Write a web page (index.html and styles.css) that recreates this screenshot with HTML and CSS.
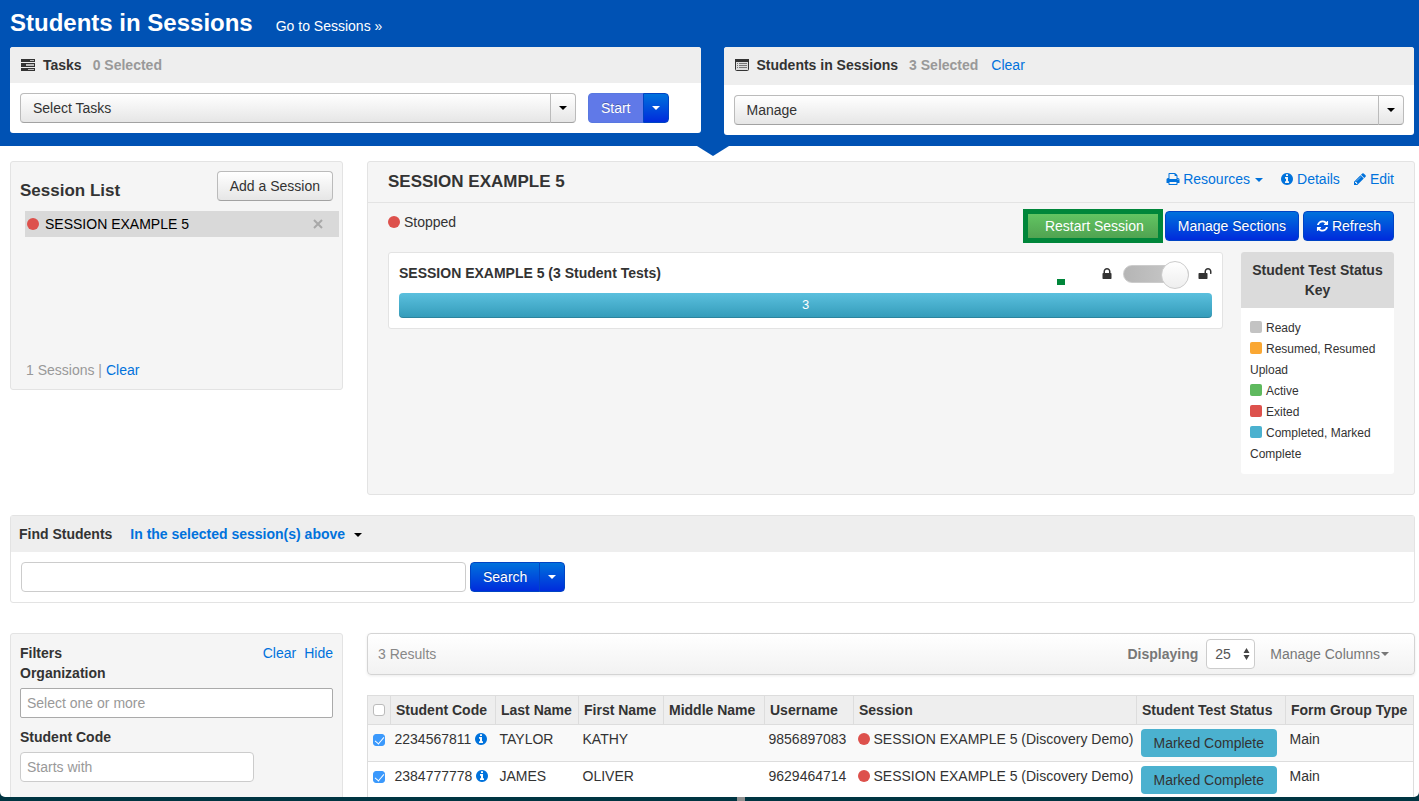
FILE: index.html
```html
<!DOCTYPE html>
<html lang="en">
<head>
    <meta charset="UTF-8">
    <meta name="viewport" content="width=device-width, initial-scale=1.0">
    <title>Students in Sessions</title>
    <link rel="stylesheet" href="styles.css">
</head>
<body>
    <svg class="sprite" aria-hidden="true">
        <symbol id="info" viewBox="0 128 1536 1536"><path d="M1024 1376v-160q0-14-9-23t-23-9h-96v-512q0-14-9-23t-23-9h-320q-14 0-23 9t-9 23v160q0 14 9 23t23 9h96v320h-96q-14 0-23 9t-9 23v160q0 14 9 23t23 9h448q14 0 23-9t9-23zm-128-896v-160q0-14-9-23t-23-9h-192q-14 0-23 9t-9 23v160q0 14 9 23t23 9h192q14 0 23-9t9-23zm640 416q0 209-103 385.5t-279.5 279.5-385.5 103-385.5-103-279.5-279.5-103-385.5 103-385.5 279.5-279.5 385.5-103 385.5 103 279.5 279.5 103 385.5z"/></symbol>
    </svg>
    <div class="window">
        <header class="top">
            <div class="title-row">
                <h1>Students in Sessions</h1>
                <a href="#">Go to Sessions »</a>
            </div>
            <div class="top-panels">
                <section class="card">
                    <div class="card-head">
                        <svg class="icon-wide" viewBox="0 0 14 12"><path fill="#333" d="M0 0h14v3H0zM0 4h14v4H0zM0 9h14v3H0z"/><path fill="#bbb" d="M9 1h4v1H9zM5 5h8v2H5zM7 10h6v1H7z"/></svg>
                        <b>Tasks</b>
                        <span class="count">0 Selected</span>
                    </div>
                    <div class="card-body">
                        <div class="split tasks-split">
                            <button class="btn split-main">Select Tasks</button>
                            <button class="btn split-caret" aria-label="Show tasks"><i class="caret"></i></button>
                        </div>
                        <div class="split">
                            <button class="btn primary split-main faded">Start</button>
                            <button class="btn primary split-caret" aria-label="Start options"><i class="caret"></i></button>
                        </div>
                    </div>
                </section>
                <section class="card">
                    <div class="card-head tall">
                        <svg class="icon-wide" viewBox="0 0 14 12"><rect x=".5" y=".5" width="13" height="11" rx="1" fill="#ddd" stroke="#333"/><path fill="#333" d="M0 0h14v3H0z"/><path fill="#777" d="M2 4h1v1H2zM4 4h8v1H4zM2 6h1v1H2zM4 6h8v1H4zM2 8h1v1H2zM4 8h8v1H4z"/></svg>
                        <b>Students in Sessions</b>
                        <span class="count">3 Selected</span>
                        <a href="#">Clear</a>
                    </div>
                    <div class="card-body">
                        <div class="split manage-split">
                            <button class="btn split-main">Manage</button>
                            <button class="btn split-caret" aria-label="Show manage options"><i class="caret"></i></button>
                        </div>
                    </div>
                </section>
            </div>
        </header>

        <main>
            <div class="columns">
                <section class="panel session-list">
                    <div class="list-head">
                        <h2>Session List</h2>
                        <button class="btn">Add a Session</button>
                    </div>
                    <ul>
                        <li><i class="dot"></i><span>SESSION EXAMPLE 5</span><button class="remove" aria-label="Remove session"><svg viewBox="0 0 10 10"><path d="M1 1l8 8M9 1l-8 8"/></svg></button></li>
                    </ul>
                    <p class="muted">1 Sessions | <a href="#">Clear</a></p>
                </section>

                <section class="panel session-detail">
                    <div class="detail-head">
                        <h2>SESSION EXAMPLE 5</h2>
                        <nav>
                            <a href="#"><svg class="icon" viewBox="0 0 1792 1792"><path d="M448 1536h896v-256h-896v256zm0-640h896v-384h-160q-40 0-68-28t-28-68v-160h-640v640zm1152 64q0-26-19-45t-45-19-45 19-19 45 19 45 45 19 45-19 19-45zm128 0v416q0 13-9.5 22.5t-22.5 9.5h-224v160q0 40-28 68t-68 28h-960q-40 0-68-28t-28-68v-160h-224q-13 0-22.5-9.5t-9.5-22.5v-416q0-79 56.5-135.5t135.5-56.5h64v-544q0-40 28-68t68-28h672q40 0 88 20t76 48l152 152q28 28 48 76t20 88v256h64q79 0 135.5 56.5t56.5 135.5z"/></svg>Resources<i class="caret"></i></a>
                            <a href="#"><svg class="icon-info"><use href="#info"/></svg>Details</a>
                            <a href="#"><svg class="icon" viewBox="0 0 1792 1792"><path d="M491 1536l91-91-235-235-91 91v107h128v128h107zm523-928q0-22-22-22-10 0-17 7l-542 542q-7 7-7 17 0 22 22 22 10 0 17-7l542-542q7-7 7-17zm-54-192l416 416-832 832h-416v-416zm683 96q0 53-37 90l-166 166-416-416 166-165q36-38 90-38 53 0 91 38l235 234q37 39 37 91z"/></svg>Edit</a>
                        </nav>
                    </div>
                    <div class="detail-actions">
                        <p><i class="dot"></i>Stopped</p>
                        <div class="actions">
                            <button class="restart">Restart Session</button>
                            <button class="btn primary">Manage Sections</button>
                            <button class="btn primary"><svg class="icon" viewBox="0 0 1792 1792"><path d="M1639 1056q0 5-1 7-64 268-268 434.5t-478 166.5q-146 0-282.5-55t-243.5-157l-129 129q-19 19-45 19t-45-19-19-45v-448q0-26 19-45t45-19h448q26 0 45 19t19 45-19 45l-137 137q71 66 161 102t187 36q134 0 250-65t186-179q11-17 53-117 8-23 30-23h192q13 0 22.5 9.5t9.5 22.5zm25-800v448q0 26-19 45t-45 19h-448q-26 0-45-19t-19-45 19-45l138-138q-148-137-349-137-134 0-250 65t-186 179q-11 17-53 117-8 23-30 23h-199q-13 0-22.5-9.5t-9.5-22.5v-7q65-268 270-434.5t480-166.5q146 0 284 55.5t245 156.5l130-129q19-19 45-19t45 19 19 45z"/></svg>Refresh</button>
                        </div>
                    </div>
                    <div class="detail-body">
                        <div class="tests">
                            <div class="tests-head">
                                <b>SESSION EXAMPLE 5 (3 Student Tests)</b>
                                <i class="marker"></i>
                                <label class="lock-toggle">
                                    <svg class="icon" viewBox="0 0 1792 1792"><path d="M640 768h512v-192q0-106-75-181t-181-75-181 75-75 181v192zm832 96v576q0 40-28 68t-68 28h-960q-40 0-68-28t-28-68v-576q0-40 28-68t68-28h32v-192q0-184 132-316t316-132 316 132 132 316v192h32q40 0 68 28t28 68z"/></svg>
                                    <input type="checkbox" checked aria-label="Unlock session">
                                    <svg class="icon" viewBox="0 0 1792 1792"><path d="M1728 576v256q0 26-19 45t-45 19h-64q-26 0-45-19t-19-45v-256q0-106-75-181t-181-75-181 75-75 181v192h96q40 0 68 28t28 68v576q0 40-28 68t-68 28h-960q-40 0-68-28t-28-68v-576q0-40 28-68t68-28h672v-192q0-185 131.5-316.5t316.5-131.5 316.5 131.5 131.5 316.5z"/></svg>
                                </label>
                            </div>
                            <div class="bar">3</div>
                        </div>
                        <aside class="key">
                            <h3>Student Test Status Key</h3>
                            <ul>
                                <li><i class="swatch ready"></i>Ready</li>
                                <li><i class="swatch resumed"></i>Resumed, Resumed Upload</li>
                                <li><i class="swatch active"></i>Active</li>
                                <li><i class="swatch exited"></i>Exited</li>
                                <li><i class="swatch completed"></i>Completed, Marked Complete</li>
                            </ul>
                        </aside>
                    </div>
                </section>
            </div>

            <section class="find">
                <div class="find-head">
                    <label for="search"><b>Find Students</b></label>
                    <a href="#"><b>In the selected session(s) above</b><i class="caret"></i></a>
                </div>
                <div class="find-body">
                    <input type="text" id="search">
                    <div class="split">
                        <button class="btn primary split-main">Search</button>
                        <button class="btn primary split-caret" aria-label="Search options"><i class="caret"></i></button>
                    </div>
                </div>
            </section>

            <div class="columns">
                <section class="panel filters">
                    <div class="filters-head">
                        <b>Filters</b>
                        <span><a href="#">Clear</a><a href="#">Hide</a></span>
                    </div>
                    <label for="org">Organization</label>
                    <input type="text" id="org" placeholder="Select one or more">
                    <label for="code">Student Code</label>
                    <input type="text" id="code" placeholder="Starts with">
                </section>

                <section class="results">
                    <div class="results-bar">
                        <span class="result-count">3 Results</span>
                        <label for="pageSize">Displaying</label>
                        <span class="page-size">
                            <select id="pageSize"><option>25</option><option>50</option></select>
                            <svg viewBox="0 0 6 14"><path d="M0 6l3-5 3 5zM0 8l3 5 3-5z"/></svg>
                        </span>
                        <button class="columns-btn">Manage Columns<i class="caret"></i></button>
                    </div>
                    <table>
                        <colgroup>
                            <col class="c-check"><col class="c-code"><col class="c-last"><col class="c-first"><col class="c-middle"><col class="c-user"><col><col class="c-status"><col class="c-form">
                        </colgroup>
                        <thead>
                            <tr>
                                <th><input type="checkbox" aria-label="Select all"></th>
                                <th>Student Code</th>
                                <th>Last Name</th>
                                <th>First Name</th>
                                <th>Middle Name</th>
                                <th>Username</th>
                                <th>Session</th>
                                <th>Student Test Status</th>
                                <th>Form Group Type</th>
                            </tr>
                        </thead>
                        <tbody>
                            <tr>
                                <td><input type="checkbox" checked aria-label="Select Kathy Taylor"></td>
                                <td>2234567811 <svg class="icon-info"><use href="#info"/></svg></td>
                                <td>TAYLOR</td>
                                <td>KATHY</td>
                                <td></td>
                                <td>9856897083</td>
                                <td><i class="dot"></i>SESSION EXAMPLE 5 (Discovery Demo)</td>
                                <td><button class="status">Marked Complete</button></td>
                                <td>Main</td>
                            </tr>
                            <tr>
                                <td><input type="checkbox" checked aria-label="Select Oliver James"></td>
                                <td>2384777778 <svg class="icon-info"><use href="#info"/></svg></td>
                                <td>JAMES</td>
                                <td>OLIVER</td>
                                <td></td>
                                <td>9629464714</td>
                                <td><i class="dot"></i>SESSION EXAMPLE 5 (Discovery Demo)</td>
                                <td><button class="status">Marked Complete</button></td>
                                <td>Main</td>
                            </tr>
                        </tbody>
                    </table>
                </section>
            </div>
        </main>
    </div>
    <div class="desktop-edge"><i></i></div>
</body>
</html>
```
FILE: styles.css
```css
* {
    box-sizing: border-box;
}
body {
    margin: 0;
    height: 100vh;
    display: flex;
    flex-direction: column;
    overflow: hidden;
    background: #003542;
    color: #333;
    font: 14px/20px "Liberation Sans", Arial, sans-serif;
}
h1, h2, h3, p, ul {
    margin: 0;
    padding: 0;
}
ul {
    list-style: none;
}
a {
    color: #0072dc;
    text-decoration: none;
}
button, input, select {
    font: inherit;
    color: inherit;
    margin: 0;
}
h2 {
    font-size: 17px;
    line-height: 20px;
}
.sprite {
    position: absolute;
    width: 0;
    height: 0;
}
.window {
    flex: 1;
    min-height: 0;
    overflow: hidden;
    background: #fff;
    border-radius: 0 0 5px 5px;
}
.desktop-edge {
    height: 4px;
    display: flex;
    justify-content: center;
    padding-left: 63px;
}
.desktop-edge i {
    width: 8px;
    background: #8f8f8f;
}

/* small shared pieces */
.caret {
    display: inline-block;
    border: 4px solid transparent;
    border-top-color: currentColor;
    border-bottom: 0;
    vertical-align: middle;
}
.dot {
    display: inline-block;
    width: 12px;
    height: 12px;
    margin-right: 4px;
    border-radius: 50%;
    background: #dd514c;
    vertical-align: -1px;
}
.icon, .icon-info {
    width: 14px;
    height: 14px;
    fill: currentColor;
    vertical-align: -2px;
}
.icon-info {
    width: 12px;
    height: 12px;
    vertical-align: -1px;
}
.btn {
    height: 30px;
    padding: 0 12px;
    border: 1px solid #bbb;
    border-bottom-color: #a2a2a2;
    border-radius: 4px;
    background: linear-gradient(#fff, #e6e6e6);
    color: #333;
    cursor: pointer;
}
.btn.primary {
    border-color: #0044c4;
    background: linear-gradient(#0072dc, #002bdc);
    color: #fff;
    text-shadow: 0 -1px 0 rgba(0, 0, 0, 0.25);
}
.btn.primary.faded {
    border-color: #5878e0;
    background: #6079e8;
}
.split {
    display: flex;
}
.split .split-main {
    flex: 1;
    border-radius: 4px 0 0 4px;
    text-align: left;
}
.split .split-caret {
    display: flex;
    align-items: center;
    justify-content: center;
    width: 26px;
    margin-left: -1px;
    padding: 0;
    border-radius: 0 4px 4px 0;
}
.split .btn:not(.primary) .caret {
    color: #000;
}

/* blue header */
.top {
    position: relative;
    height: 146px;
    padding: 0 5px 0 10px;
    background: #0052b4;
}
.top::after {
    content: "";
    position: absolute;
    top: 100%;
    left: 50%;
    margin-left: -13px;
    border: 16px solid transparent;
    border-top: 10px solid #0052b4;
    border-bottom: 0;
}
.title-row {
    display: flex;
    align-items: baseline;
    gap: 23px;
    height: 47px;
    padding-top: 8px;
    color: #fff;
}
.title-row a {
    color: #fff;
}
h1 {
    font-size: 24px;
    line-height: 30px;
}
.top-panels {
    display: grid;
    grid-template-columns: 1fr 1fr;
    gap: 23px;
    align-items: start;
}
.card {
    border-radius: 3px;
    background: #fff;
    overflow: hidden;
}
.card-head {
    display: flex;
    align-items: center;
    height: 36px;
    padding: 0 11px;
    background: #eee;
}
.card-head.tall {
    height: 38px;
    padding-bottom: 2px;
}
.card-head b {
    margin: 0 11px 0 8px;
}
.count {
    margin-right: 13px;
    color: #999;
    font-weight: bold;
}
.icon-wide {
    width: 14px;
    height: 12px;
}
.card-body {
    display: flex;
    gap: 12px;
    padding: 10px 32px 10px 10px;
}
.tasks-split {
    flex: 1;
}
.manage-split {
    flex: 1;
    margin-right: -22px;
}

/* session panels */
main {
    padding: 15px 4px 0 10px;
}
.columns {
    display: grid;
    grid-template-columns: 333px 1fr;
    gap: 24px;
    align-items: start;
}
.panel {
    border: 1px solid #e3e3e3;
    border-radius: 3px;
    background: #f5f5f5;
}
.session-list {
    padding: 9px;
}
.list-head {
    display: flex;
    justify-content: space-between;
    height: 40px;
}
.list-head h2 {
    margin-top: 10px;
}
.session-list ul {
    height: 149px;
    margin: 0 -6px 0 5px;
}
.session-list li {
    display: flex;
    align-items: center;
    height: 26px;
    padding: 0 14px 0 2px;
    background: #d9d9d9;
    color: #000;
}
.session-list li span {
    flex: 1;
    margin-left: 2px;
}
.remove {
    display: flex;
    padding: 2px;
    border: 0;
    background: none;
}
.remove svg {
    width: 10px;
    height: 10px;
    stroke: #a8a8a8;
    stroke-width: 2;
}
.muted {
    padding-left: 6px;
    color: #999;
}
.session-detail {
    padding-bottom: 20px;
}
.detail-head {
    display: flex;
    justify-content: space-between;
    height: 41px;
    padding: 7px 20px 0;
    border-bottom: 1px solid #e3e3e3;
}
.detail-head h2 {
    padding-top: 3px;
}
.detail-head nav {
    display: flex;
    gap: 13px;
}
.detail-head .icon, .detail-head .icon-info {
    margin-right: 3px;
}
.detail-head .icon-info {
    margin-right: 4px;
}
.detail-head .caret {
    margin: 0 5px;
}
.detail-actions {
    display: flex;
    justify-content: space-between;
    height: 49px;
    padding: 6px 20px 0;
}
.detail-actions p {
    padding-top: 3px;
}
.actions {
    display: flex;
    align-items: center;
    gap: 4px;
    height: 34px;
}
.actions .icon {
    width: 13px;
    margin-right: 3px;
}
.restart {
    height: 34px;
    margin-right: -2px;
    padding: 0 14px 0 17px;
    border: 5px solid #00863a;
    background: linear-gradient(#62c462, #51a351);
    color: #fff;
}
.detail-body {
    display: flex;
    align-items: flex-start;
    gap: 18px;
    padding: 0 20px;
}
.tests {
    flex: 1;
    padding: 10px;
    border: 1px solid #e3e3e3;
    border-radius: 3px;
    background: #fff;
}
.tests-head {
    position: relative;
    display: flex;
    justify-content: space-between;
    height: 30px;
}
.marker {
    position: absolute;
    right: 147px;
    top: 16px;
    width: 8px;
    height: 6px;
    background: #00863a;
}
.lock-toggle {
    display: flex;
    align-items: center;
    gap: 9px;
    height: 22px;
}
.lock-toggle input {
    appearance: none;
    position: relative;
    width: 66px;
    height: 18px;
    border: 1px solid #ccc;
    border-radius: 9px;
    background: linear-gradient(90deg, #b5b5b5, #ccc);
}
.lock-toggle input::after {
    content: "";
    position: absolute;
    top: -5px;
    right: -1px;
    width: 26px;
    height: 26px;
    border: 1px solid #ccc;
    border-radius: 50%;
    background: linear-gradient(#fff, #eee);
}
.bar {
    height: 25px;
    border-radius: 4px;
    background: linear-gradient(#5bc0de, #339bb9);
    box-shadow: inset 0 -1px 0 rgba(0, 0, 0, 0.15);
    color: #fff;
    font-size: 13px;
    line-height: 24px;
    text-align: center;
}
.key {
    width: 153px;
    border-radius: 3px;
    background: #fff;
    overflow: hidden;
}
.key h3 {
    padding: 8px 10px;
    background: #dbdbdb;
    font-size: 14px;
    text-align: center;
}
.key ul {
    padding: 10px 9px 9px;
    font-size: 12px;
    line-height: 21px;
}
.swatch {
    display: inline-block;
    width: 12px;
    height: 12px;
    margin-right: 4px;
    border-radius: 2px;
    vertical-align: -1px;
}
.ready { background: #c3c3c3; }
.resumed { background: #faa732; }
.active { background: #5eb95e; }
.exited { background: #dd514c; }
.completed { background: #4bb1cf; }

/* find students */
.find {
    margin: 20px 0 30px;
    border: 1px solid #e3e3e3;
    border-radius: 3px;
}
.find-head {
    display: flex;
    gap: 18px;
    padding: 8px;
    background: #eee;
}
.find-head .caret {
    margin-left: 9px;
    color: #000;
}
.find-body {
    display: flex;
    gap: 4px;
    padding: 10px;
}
input[type="text"] {
    height: 30px;
    padding: 0 6px;
    border: 1px solid #ccc;
    border-radius: 4px;
    background: #fff;
}
input::placeholder {
    color: #999;
    opacity: 1;
}
#search {
    width: 445px;
}

/* filters and results */
.filters {
    display: flex;
    flex-direction: column;
    padding: 9px 9px 60px;
}
.filters-head {
    display: flex;
    justify-content: space-between;
}
.filters-head a {
    margin-left: 8px;
}
.filters label {
    margin-bottom: 5px;
    font-weight: bold;
}
.filters #org {
    margin-bottom: 9px;
    border-color: #aaa;
    border-radius: 2px;
}
.filters #code {
    width: 234px;
}
.results-bar {
    display: flex;
    align-items: center;
    height: 42px;
    margin-bottom: 20px;
    padding: 0 25px 0 10px;
    border: 1px solid #d4d4d4;
    border-radius: 4px;
    background: linear-gradient(#fff, #f2f2f2);
    box-shadow: 0 1px 3px rgba(0, 0, 0, 0.08);
    color: #777;
}
.result-count {
    flex: 1;
    color: #888;
}
.results-bar label {
    font-weight: bold;
}
.page-size {
    position: relative;
    margin: 0 15px 0 8px;
}
.page-size select {
    appearance: none;
    width: 49px;
    height: 30px;
    padding: 0 8px;
    border: 1px solid #ccc;
    border-radius: 4px;
    background: #fff;
    color: #555;
}
.page-size svg {
    position: absolute;
    top: 8px;
    right: 5px;
    width: 7px;
    height: 14px;
    fill: #444;
    pointer-events: none;
}
.columns-btn {
    padding: 0;
    border: 0;
    background: none;
}
.columns-btn .caret {
    margin: -2px 0 0 1px;
}
table {
    width: calc(100% - 1px);
    border: 1px solid #ddd;
    border-collapse: collapse;
    table-layout: fixed;
    white-space: nowrap;
}
th {
    height: 29px;
    padding: 0 0 0 5px;
    border: 1px solid #ddd;
    background: #eee;
    text-align: left;
}
td {
    height: 37px;
    padding: 4px 0 0 4px;
    border-top: 1px solid #ddd;
    vertical-align: top;
}
tbody tr:nth-child(odd) {
    background: #f9f9f9;
}
td .icon-info {
    fill: #0072dc;
}
.c-check { width: 23px; }
.c-code { width: 105px; }
.c-last { width: 83px; }
.c-first { width: 85px; }
.c-middle { width: 101px; }
.c-user { width: 89px; }
.c-status { width: 149px; }
.c-form { width: 128px; }
table input {
    appearance: none;
    display: block;
    width: 12px;
    height: 12px;
    border: 1px solid #bbb;
    border-radius: 3px;
    background: #fff;
}
td input {
    margin: 5px 0 0 1px;
}
table input:checked {
    display: flex;
    justify-content: center;
    border-color: #3b99fc;
    background: #3b99fc;
}
table input:checked::after {
    content: "";
    width: 4px;
    height: 8px;
    border: solid #fff;
    border-width: 0 1px 1px 0;
    transform: rotate(40deg);
}
.status {
    display: block;
    height: 28px;
    padding: 0 13px;
    border: 0;
    border-radius: 4px;
    background: #4bb1cf;
}
```
